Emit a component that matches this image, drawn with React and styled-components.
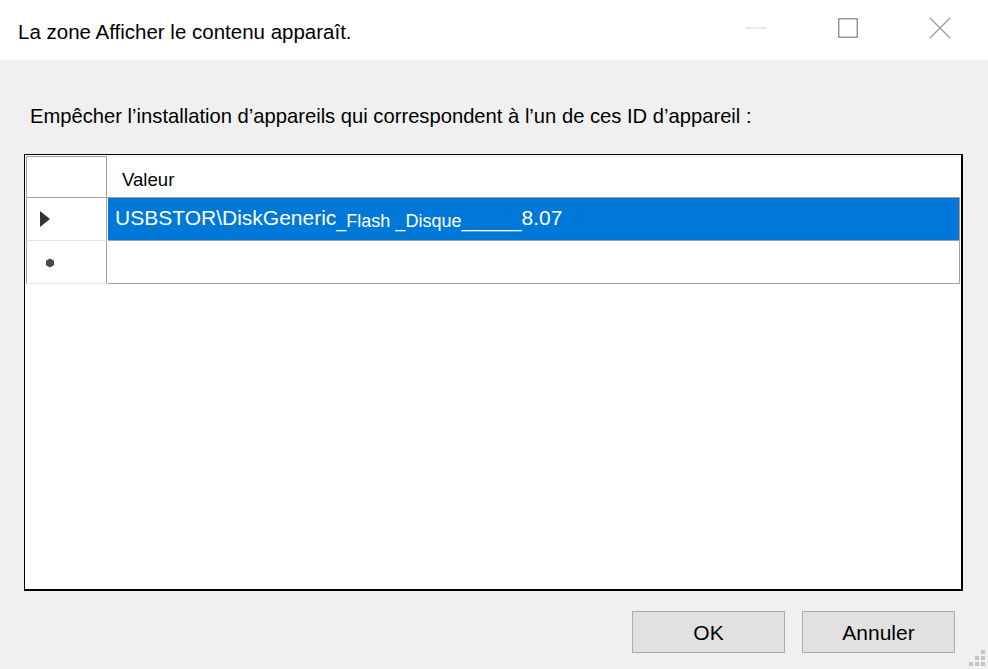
import React from "react";
import styled, { createGlobalStyle } from "styled-components";

const GlobalStyle = createGlobalStyle`
  html, body {
    margin: 0;
    padding: 0;
    background: #f0f0f0;
  }
  * {
    box-sizing: border-box;
  }
`;

const rows = [
  { marker: "current", selected: true },
  { marker: "new", selected: false },
];

export default function App() {
  return (
    <>
      <GlobalStyle />
      <Window>
        <TitleBar>
          <Title>La zone Afficher le contenu apparaît.</Title>
          <Controls>
            <ControlButton>
              <svg width="22" height="22" viewBox="0 0 22 22">
                <line x1="1" y1="11" x2="21" y2="11" stroke="#e3e3e3" strokeWidth="1.5" />
              </svg>
            </ControlButton>
            <ControlButton>
              <svg width="22" height="22" viewBox="0 0 22 22">
                <rect x="1.75" y="1.75" width="18.5" height="18.5" fill="none" stroke="#999" strokeWidth="1.5" />
              </svg>
            </ControlButton>
            <ControlButton>
              <svg width="22" height="22" viewBox="0 0 22 22">
                <path d="M1 1 L21 21 M21 1 L1 21" stroke="#999" strokeWidth="1.3" fill="none" />
              </svg>
            </ControlButton>
          </Controls>
        </TitleBar>

        <Body>
          <Label>Empêcher l’installation d’appareils qui correspondent à l’un de ces ID d’appareil :</Label>
          <Grid>
            <GridRow>
              <RowHeader $corner />
              <ColumnHeader>Valeur</ColumnHeader>
            </GridRow>
            {rows.map((row, i) => (
              <GridRow key={i}>
                <RowHeader $marker={row.marker}>
                  {row.marker === "current" ? (
                    <svg width="12" height="20" viewBox="0 0 12 20">
                      <polygon points="1,2 11,10 1,18" fill="#333" />
                    </svg>
                  ) : (
                    <svg width="10" height="10" viewBox="0 0 10 10">
                      <polygon points="5,0.5 9,2.8 9,7.2 5,9.5 1,7.2 1,2.8" fill="#4a4a4a" />
                    </svg>
                  )}
                </RowHeader>
                <Cell $selected={row.selected}>
                  {row.selected && (
                    <>
                      USBSTOR\DiskGeneric<Small>_Flash _Disque______</Small>8.07
                    </>
                  )}
                </Cell>
              </GridRow>
            ))}
          </Grid>

          <Footer>
            <Button>OK</Button>
            <Button>Annuler</Button>
          </Footer>
        </Body>
        <Grip>
          {[0, 1, 2, 3, 4, 5].map((i) => (
            <Dot key={i} />
          ))}
        </Grip>
      </Window>
    </>
  );
}

const Window = styled.div`
  position: relative;
  width: 988px;
  height: 669px;
  display: flex;
  flex-direction: column;
  background: #f0f0f0;
  font-family: "Liberation Sans", Arial, sans-serif;
  color: #000;
  overflow: hidden;
`;

const TitleBar = styled.div`
  height: 60px;
  background: #fff;
  display: flex;
  align-items: center;
  justify-content: space-between;
  padding: 0 37px 0 18px;
`;

const Title = styled.div`
  font-size: 20.5px;
  margin-top: 3px;
`;

const Controls = styled.div`
  display: flex;
  align-items: center;
  gap: 70px;
  margin-top: -4px;
`;

const ControlButton = styled.div`
  width: 22px;
  height: 22px;
  display: flex;
`;

const Body = styled.div`
  flex: 1;
  display: flex;
  flex-direction: column;
  padding: 45px 25px 0 24px;
`;

const Label = styled.div`
  font-size: 20.2px;
  padding-left: 6px;
  height: 49px;
`;

const Grid = styled.div`
  height: 437px;
  background: #fff;
  border-top: 1px solid #000;
  border-left: 1px solid #000;
  border-right: 2px solid #000;
  border-bottom: 2px solid #000;
  padding: 1px 0 0 1px;
`;

const GridRow = styled.div`
  display: grid;
  grid-template-columns: 81px 1fr;
  height: 43px;
  &:first-child {
    height: 42px;
  }
`;

const RowHeader = styled.div`
  display: flex;
  align-items: center;
  padding-left: ${(p) => (p.$marker === "new" ? "18px" : "12px")};
  padding-top: ${(p) => (p.$marker === "new" ? "2px" : "0")};
  background: #fff;
  border-left: 1px solid #a8a8a8;
  border-right: 1px solid #a0a0a0;
  border-bottom: 1px solid ${(p) => (p.$corner ? "#a0a0a0" : "#e3e3e3")};
  border-top: ${(p) => (p.$corner ? "1px solid #a0a0a0" : "none")};
`;

const ColumnHeader = styled.div`
  display: flex;
  align-items: center;
  padding: 6px 0 0 15px;
  font-size: 18.6px;
  border-top: 1px solid #ececec;
  border-bottom: 1px solid #a0a0a0;
  margin-right: 1px;
`;

const Cell = styled.div`
  display: flex;
  align-items: baseline;
  padding: 8px 0 0 7px;
  margin-left: 1px;
  margin-right: 1px;
  font-size: 21px;
  color: ${(p) => (p.$selected ? "#fff" : "#000")};
  background: ${(p) => (p.$selected ? "#0078d7" : "#fff")};
  border-bottom: 1px solid #a0a0a0;
  border-right: 1px solid #a0a0a0;
  white-space: pre;
`;

const Small = styled.span`
  font-size: 18px;
  position: relative;
  top: 2px;
`;

const Footer = styled.div`
  display: flex;
  justify-content: flex-end;
  gap: 17px;
  padding: 20px 8px 0 0;
`;

const Button = styled.div`
  width: 153px;
  height: 42px;
  display: flex;
  align-items: center;
  justify-content: center;
  background: #e1e1e1;
  border: 1px solid #adadad;
  font-size: 21px;
  padding-top: 2px;
`;

const Grip = styled.div`
  position: absolute;
  right: 3px;
  bottom: 3px;
  width: 16px;
  height: 16px;
  display: grid;
  grid-template-columns: repeat(3, 4px);
  grid-template-rows: repeat(3, 4px);
  gap: 2px;
  & > :nth-child(1) { grid-area: 1 / 3; }
  & > :nth-child(2) { grid-area: 2 / 2; }
  & > :nth-child(3) { grid-area: 2 / 3; }
  & > :nth-child(4) { grid-area: 3 / 1; }
  & > :nth-child(5) { grid-area: 3 / 2; }
  & > :nth-child(6) { grid-area: 3 / 3; }
`;

const Dot = styled.div`
  width: 4px;
  height: 4px;
  background: #c4c4c4;
`;
